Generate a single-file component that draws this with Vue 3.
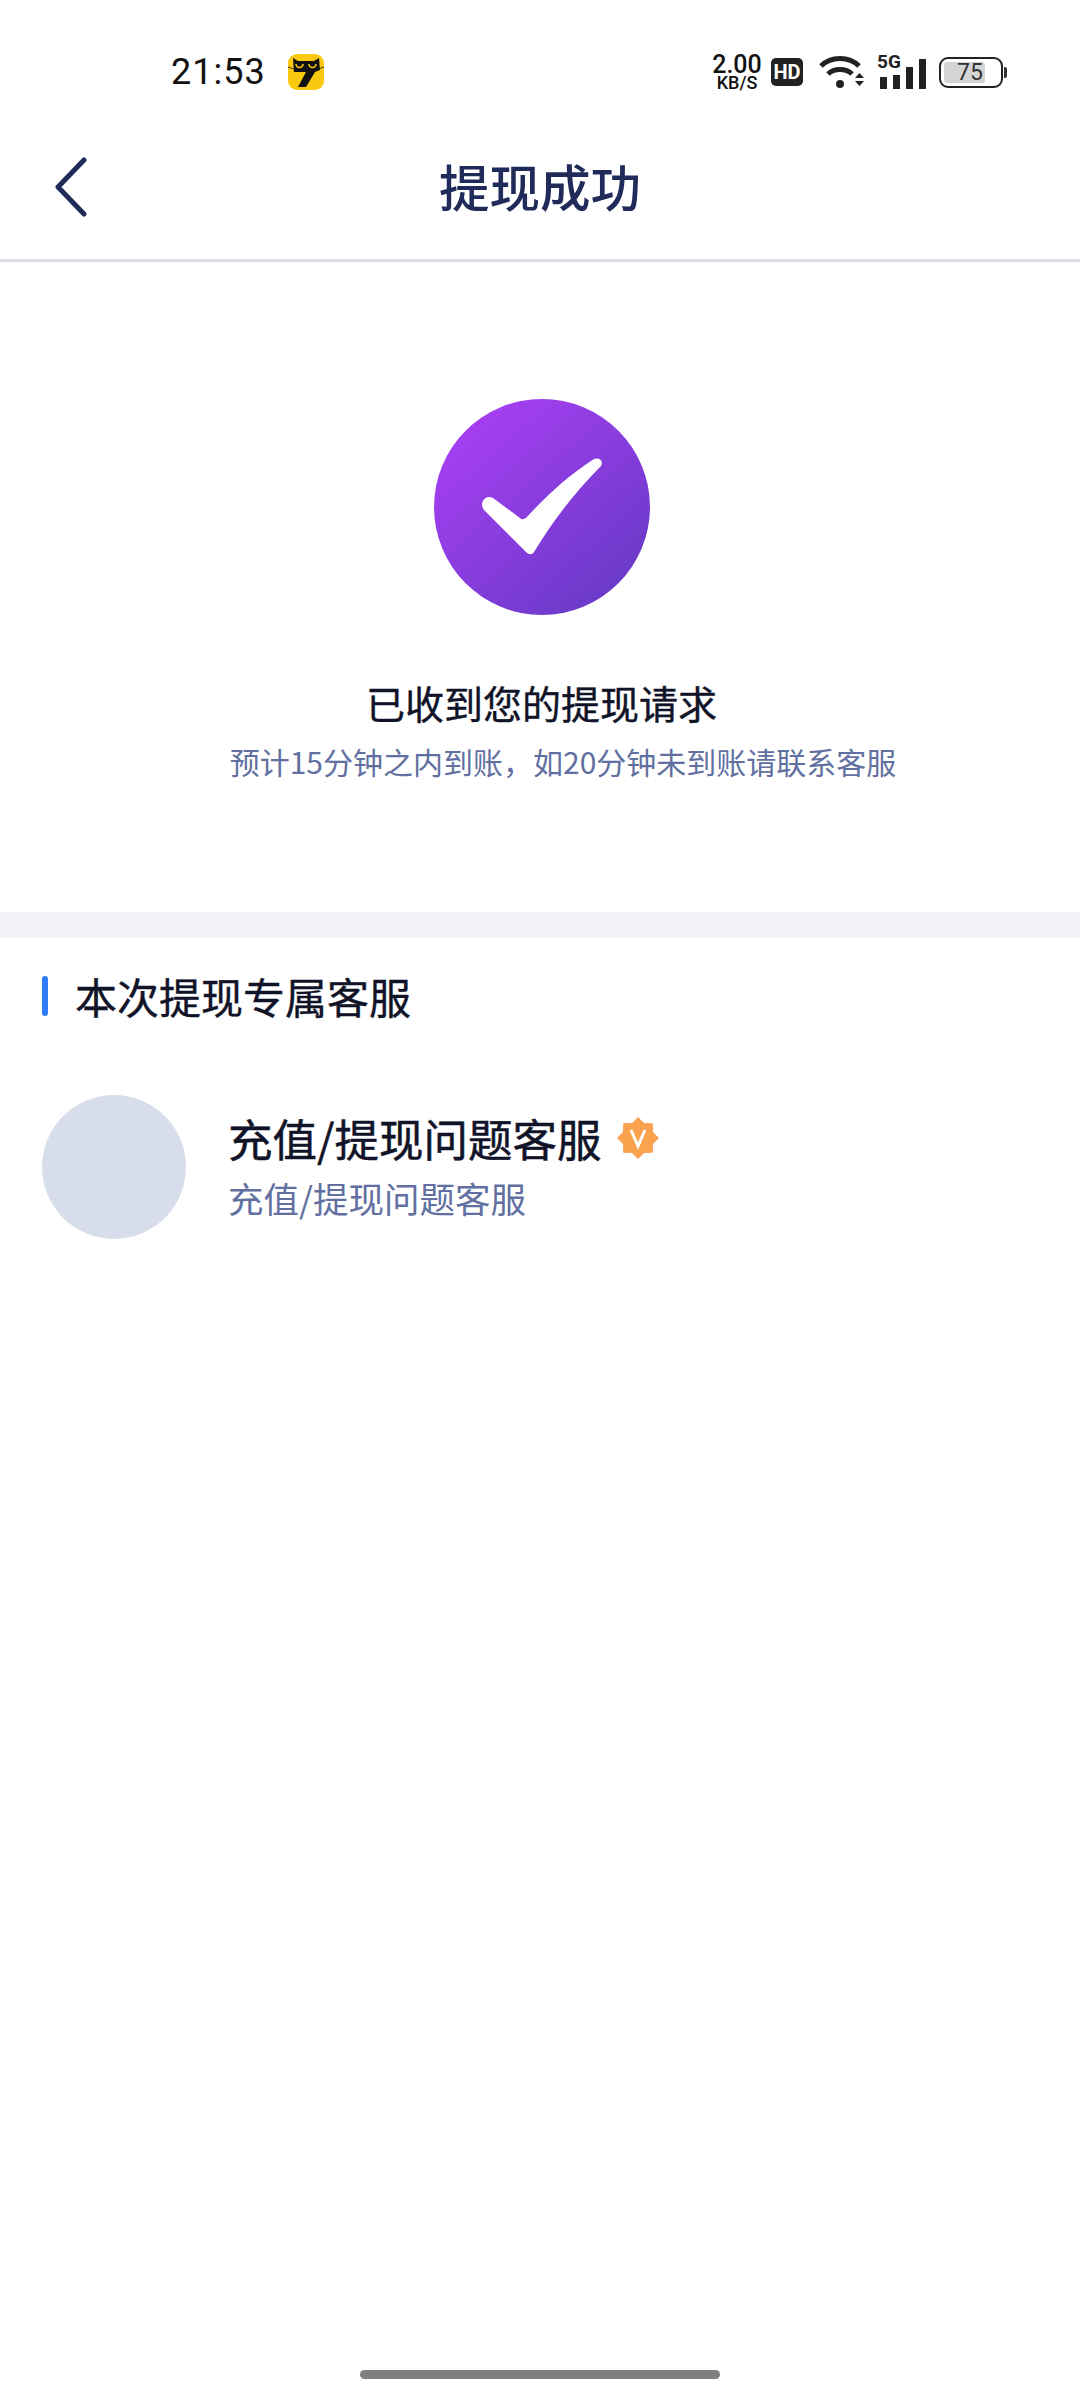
<template>
  <div class="page">
    <div class="status-bar">
      <div class="status-left">
        <span class="time">21:53</span>
        <svg class="app-icon" viewBox="0 0 36 36" width="36" height="36">
          <rect x="0" y="0" width="36" height="36" rx="9" fill="#fac80f" />
          <path d="M5 4 L10 7 H26 L31 4 L32 16 L27 18 L18 33 H10 L18 18 H6 Z" fill="#111" />
          <path d="M8 10 A3.500 3.500 0 0 0 15 10 M21 10 A3.500 3.500 0 0 0 28 10" fill="none" stroke="#fac80f" stroke-width="1.600" />
          <path d="M0 13 L6 15 M30 15 L36 13" stroke="#111" stroke-width="0.800" />
        </svg>
      </div>
      <div class="status-right">
        <div class="speed">
          <span class="speed-num">2.00</span>
          <span class="speed-unit">KB/S</span>
        </div>
        <span class="hd">HD</span>
        <svg class="wifi" viewBox="0 0 46 34" width="46" height="34">
          <path d="M2 11 C12 1 30 1 40 11" fill="none" stroke="#222" stroke-width="5" />
          <path d="M9 19 C15 13 27 13 33 19" fill="none" stroke="#222" stroke-width="5" />
          <circle cx="21" cy="29" r="4" fill="#222" />
          <path d="M36 23 L40.500 18 L45 23 Z M36 26 H45 L40.500 31 Z" fill="#222" />
        </svg>
        <div class="signal">
          <span class="five-g">5G</span>
          <div class="bars">
            <i
              v-for="(h, index) in signalBars"
              :key="index"
              :style="{ height: `${h}px` }"
            ></i>
          </div>
        </div>
        <div class="battery">
          <div class="battery-body">
            <div class="battery-fill"></div>
            <span class="battery-num">75</span>
          </div>
          <div class="battery-nub"></div>
        </div>
      </div>
    </div>

    <div class="nav">
      <svg class="back" viewBox="0 0 34 60" width="34" height="60">
        <path
          d="M30 3 L4 30 L30 57"
          fill="none"
          stroke="#212b5a"
          stroke-width="5"
          stroke-linecap="round"
          stroke-linejoin="round"
        />
      </svg>
      <h1 class="nav-title">提现成功</h1>
    </div>

    <div class="result">
      <svg class="check" viewBox="0 0 216 216" width="216" height="216">
        <defs>
          <linearGradient id="checkFill" x1="0.15" y1="0.1" x2="0.85" y2="0.9">
            <stop offset="0" stop-color="#a63ff2" />
            <stop offset="1" stop-color="#6a3ac8" />
          </linearGradient>
        </defs>
        <circle cx="108" cy="108" r="108" fill="url(#checkFill)" />
        <path
          d="M49 102 C51 98 55 97 59 99 L86 119 C88 121 90 120 92 119 C112 97 135 76 160 60 C165 58 170 62 167 67 C142 92 120 120 100 153 C98 156 95 156 92 153 L51 112 C48 109 47 105 49 102 Z"
          fill="#fff"
        />
      </svg>
      <div class="result-title">已收到您的提现请求</div>
      <div class="result-desc">预计15分钟之内到账，如20分钟未到账请联系客服</div>
    </div>

    <div class="band"></div>

    <div class="section-head">
      <i class="section-mark"></i>
      <span class="section-title">本次提现专属客服</span>
    </div>

    <div class="service">
      <div class="avatar"></div>
      <div class="service-info">
        <div class="service-name">
          <span>充值/提现问题客服</span>
          <svg class="badge" viewBox="0 0 42 42" width="42" height="42">
            <polygon
              points="21,0 27,6 35.800,6.200 36,15 42,21 36,27 35.800,35.800 27,36 21,42 15,36 6.200,35.800 6,27 0,21 6,15 6.200,6.200 15,6"
              fill="#fba24e"
            />
            <path d="M14 13 L21 29 L28 13" fill="none" stroke="#fff" stroke-width="3" />
          </svg>
        </div>
        <div class="service-desc">充值/提现问题客服</div>
      </div>
    </div>

    <div class="home-bar"></div>
  </div>
</template>

<script setup>
const signalBars = [12, 14, 22, 30];
</script>

<style scoped>
.page {
  width: 1080px;
  height: 2400px;
  background: #fff;
  display: flex;
  flex-direction: column;
  font-family: "Noto Sans CJK SC", "Noto Sans", sans-serif;
  overflow: hidden;
}

.status-bar {
  height: 100px;
  padding: 0 73px 0 171px;
  box-sizing: border-box;
  display: flex;
  align-items: center;
  justify-content: space-between;
  flex-shrink: 0;
  color: #111;
}

.status-left {
  display: flex;
  align-items: center;
  gap: 22px;
  margin-top: 44px;
}

.time {
  font-family: Roboto, sans-serif;
  font-size: 36px;
  line-height: 44px;
  letter-spacing: 1px;
}

.status-right {
  display: flex;
  align-items: center;
  margin-top: 44px;
}

.speed {
  display: flex;
  flex-direction: column;
  align-items: center;
  width: 52px;
  font-family: Roboto, sans-serif;
  font-weight: 500;
  margin-right: 8px;
}

.speed-num {
  font-size: 25px;
  line-height: 21px;
}

.speed-unit {
  font-size: 18px;
  line-height: 15px;
}

.hd {
  width: 32px;
  height: 28px;
  border-radius: 5px;
  background: #222;
  color: #fff;
  font-family: Roboto, sans-serif;
  font-weight: 700;
  font-size: 20px;
  line-height: 28px;
  text-align: center;
  margin-right: 16px;
}

.wifi {
  margin-right: 12px;
}

.signal {
  display: flex;
  align-items: flex-end;
  height: 34px;
  width: 46px;
  position: relative;
  margin-right: 16px;
}

.five-g {
  position: absolute;
  left: 0;
  top: -3px;
  font-family: Roboto, sans-serif;
  font-weight: 700;
  font-size: 19px;
  line-height: 20px;
  color: #222;
}

.bars {
  display: flex;
  align-items: flex-end;
  gap: 6px;
  margin-left: 3px;
}

.bars i {
  display: block;
  width: 7px;
  background: #222;
}

.battery {
  display: flex;
  align-items: center;
  gap: 1px;
}

.battery-body {
  width: 64px;
  height: 31px;
  border: 2px solid #222;
  border-radius: 9px;
  box-sizing: border-box;
  padding: 3px;
  position: relative;
}

.battery-fill {
  width: 41px;
  height: 100%;
  background: #d4d4d4;
  border-radius: 3px;
}

.battery-num {
  position: absolute;
  left: 16px;
  top: 0;
  font-family: Roboto, sans-serif;
  font-size: 23px;
  line-height: 27px;
  color: #333;
}

.battery-nub {
  width: 3px;
  height: 11px;
  background: #333;
  border-radius: 0 2px 2px 0;
}

.nav {
  height: 159px;
  flex-shrink: 0;
  border-bottom: 3px solid #dcdee6;
  box-sizing: content-box;
  display: flex;
  align-items: center;
  justify-content: center;
  position: relative;
}

.back {
  position: absolute;
  left: 54px;
  top: 57px;
}

.nav-title {
  margin: 0;
  font-size: 50.500px;
  line-height: 70px;
  font-weight: 500;
  color: #212b5a;
  padding-top: 10px;
}

.result {
  height: 650px;
  flex-shrink: 0;
  display: flex;
  flex-direction: column;
  align-items: center;
  box-sizing: border-box;
  padding-top: 137px;
}

.check {
  margin-left: 3px;
}

.result-title {
  margin: 59px 0 0 3px;
  font-size: 39px;
  line-height: 56px;
  -webkit-text-stroke: 0.4px #111428;
  color: #111428;
}

.result-desc {
  margin: 10px 0 0 46px;
  font-size: 30px;
  line-height: 42px;
  color: #6170a0;
}

.band {
  height: 26px;
  background: #f2f4f9;
  flex-shrink: 0;
}

.section-head {
  display: flex;
  align-items: center;
  gap: 27px;
  padding: 33px 42px 0;
}

.section-mark {
  display: block;
  width: 6px;
  height: 40px;
  border-radius: 3px;
  background: #2f7bf5;
}

.section-title {
  font-size: 42px;
  line-height: 50px;
  -webkit-text-stroke: 0.4px #111428;
  color: #111428;
}

.service {
  display: flex;
  align-items: center;
  gap: 42px;
  padding: 74px 42px 0;
}

.avatar {
  width: 144px;
  height: 144px;
  border-radius: 50%;
  background: #d7ddea;
  flex-shrink: 0;
}

.service-info {
  margin-bottom: 5px;
}

.service-name {
  display: flex;
  align-items: center;
  gap: 16px;
  font-size: 44.500px;
  line-height: 60px;
  -webkit-text-stroke: 0.5px #111428;
  color: #111428;
}

.service-desc {
  margin-top: 6px;
  font-size: 35.500px;
  line-height: 48px;
  color: #6170a0;
}

.home-bar {
  margin: auto auto 21px;
  width: 360px;
  height: 9px;
  border-radius: 5px;
  background: #7f7f7f;
}
</style>
